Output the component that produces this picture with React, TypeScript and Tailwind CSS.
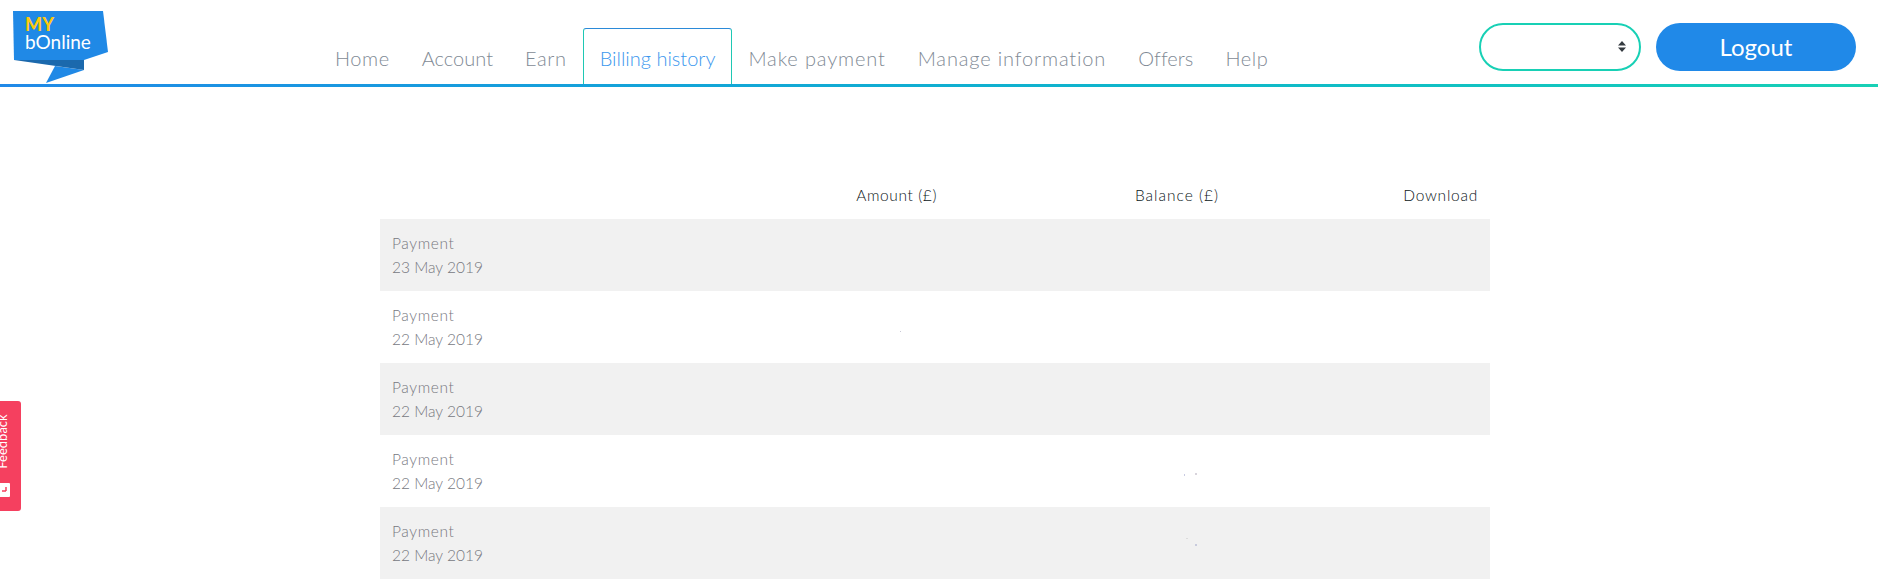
import React from "react";

const navItems: { label: string; tracking: string }[] = [
  { label: "Home", tracking: "tracking-[0.55px]" },
  { label: "Account", tracking: "tracking-[0.03px]" },
  { label: "Earn", tracking: "tracking-[0.6px]" },
  { label: "Billing history", tracking: "tracking-[0px]" },
  { label: "Make payment", tracking: "tracking-[0.85px]" },
  { label: "Manage information", tracking: "tracking-[0.85px]" },
  { label: "Offers", tracking: "tracking-[0.05px]" },
  { label: "Help", tracking: "tracking-[0.6px]" },
];

const rows: { date: string; specks?: React.ReactNode }[] = [
  { date: "23 May 2019" },
  { date: "22 May 2019", specks: <i className="absolute left-[520px] top-[40px] h-px w-px bg-[#c9c9d6]" /> },
  { date: "22 May 2019" },
  {
    date: "22 May 2019",
    specks: (
      <>
        <i className="absolute left-[804px] top-[39px] h-[2px] w-px bg-[#c9cbe2]" />
        <i className="absolute left-[815px] top-[38px] h-[2px] w-[2px] bg-[#d8d4dc]" />
      </>
    ),
  },
  {
    date: "22 May 2019",
    specks: (
      <>
        <i className="absolute left-[806px] top-[31px] h-px w-[2px] bg-[#dcdcdc]" />
        <i className="absolute left-[815px] top-[37px] h-[2px] w-[2px] bg-[#c8cbdd]" />
      </>
    ),
  },
];

function Logo() {
  return (
    <svg width="112" height="84" viewBox="0 0 112 84" className="block shrink-0">
      <polygon points="55,66 84,70 46,83" fill="#2089e6" />
      <polygon points="14,60 84,60 84,70" fill="#1b69ad" />
      <polygon points="13,11 103,11 108,52 84,60 14,60" fill="#2089e6" />
      <text x="25" y="31" fontFamily="Lato, sans-serif" fontWeight="900" fontSize="18" fill="#fdc90d">MY</text>
      <text x="25" y="49" fontFamily="Lato, sans-serif" fontWeight="400" fontSize="19" fill="#ffffff">bOnline</text>
    </svg>
  );
}

export default function App() {
  return (
    <div className="relative h-[581px] overflow-hidden bg-white font-['Lato',sans-serif]">
      <header className="flex h-[84px] items-end">
        <Logo />
        <nav className="ml-[207px] flex h-[56px] items-stretch text-[20px] font-light text-[#7f8a95]">
          {navItems.map((item) =>
            item.label === "Billing history" ? (
              <a
                key={item.label}
                className={`flex items-center rounded-t-[3px] border border-b-0 border-[#1fc8b4] border-t-[#2b8ad8] px-[16px] pt-[13px] pb-[10px] text-[#3b97ee] ${item.tracking}`}
              >
                {item.label}
              </a>
            ) : (
              <a key={item.label} className={`flex items-center px-[16px] pt-[14px] pb-[10px] ${item.tracking}`}>
                {item.label}
              </a>
            )
          )}
        </nav>
        <div className="ml-auto flex gap-[15px] self-start pt-[23px] pr-[22px]">
          <div className="relative h-[48px] w-[162px]">
            <select className="h-full w-full appearance-none rounded-full border-2 border-[#18d0b5] bg-white pl-3 pr-[14px]" />
            <svg width="8" height="11" viewBox="0 0 8 11" className="pointer-events-none absolute left-[139px] top-[18px]">
              <path d="M0 4.5 4 0l4 4.5zM0 6.5h8L4 11z" fill="#343a40" />
            </svg>
          </div>
          <button className="h-[48px] w-[200px] rounded-full bg-[#2089e8] text-[24px] text-white">Logout</button>
        </div>
      </header>
      <div className="h-[3px] bg-gradient-to-r from-[#2089e8] to-[#18d0b5]" />

      <main className="ml-[380px] mt-[57px] w-[1110px]">
        <div className="grid h-[75px] grid-cols-[569px_282px_259px] items-start pt-[39px] text-right text-[15.5px] font-light leading-6 text-[#0b1520]">
          <div className="pr-3 tracking-[0.6px]">Amount (£)</div>
          <div className="pr-3 tracking-[1px]">Balance (£)</div>
          <div className="pr-3 tracking-[0.75px]">Download</div>
        </div>
        {rows.map((row, i) => (
          <div
            key={i}
            className={`relative h-[72px] px-3 py-3 text-[15.5px] font-light leading-6 text-[#77787f] ${
              i % 2 === 0 ? "bg-[#f1f1f1]" : "bg-white"
            }`}
          >
            <div className="tracking-[0.6px]">Payment</div>
            <div>{row.date}</div>
            {row.specks}
          </div>
        ))}
      </main>

      <div className="absolute left-0 top-[401px] h-[110px] w-[21px] overflow-hidden rounded-r-[3px] bg-[#f5405f]">
        <span className="absolute left-[-28px] top-[34px] w-[60px] -rotate-90 text-center text-[13px] leading-none text-white">Feedback</span>
        <svg width="10" height="14" viewBox="0 0 10 14" className="absolute left-0 top-[82px]">
          <path d="M0 0h9a1 1 0 0 1 1 1v12a1 1 0 0 1-1 1H0z" fill="#fff" />
          <path d="M2 8h4M6 4v4" stroke="#f5405f" strokeWidth="1.5" fill="none" />
        </svg>
      </div>
    </div>
  );
}
